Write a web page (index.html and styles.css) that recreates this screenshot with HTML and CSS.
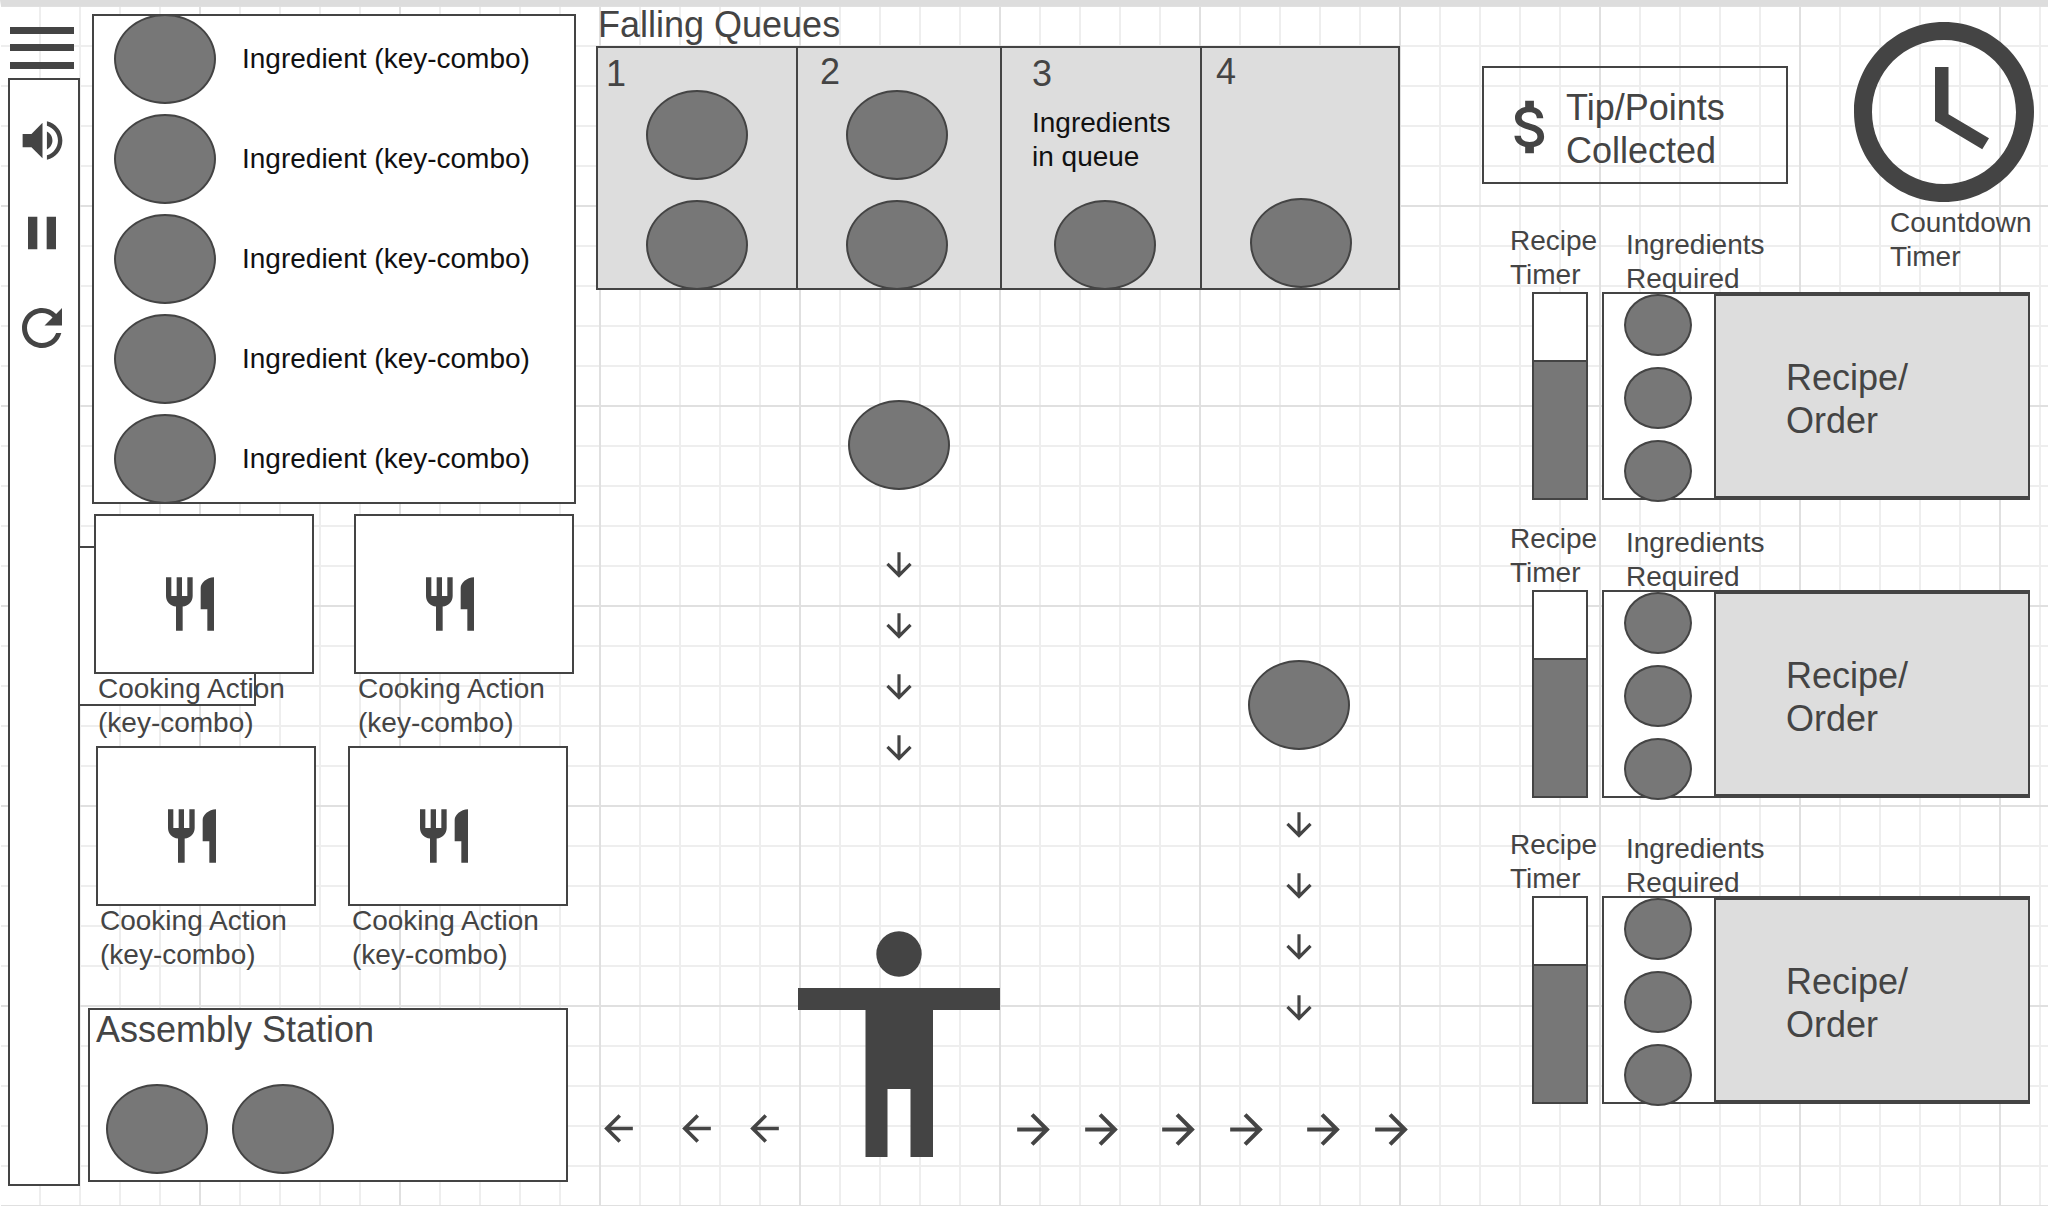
FILE: index.html
```html
<!DOCTYPE html>
<html lang="en">
<head>
<meta charset="utf-8">
<title>Falling Queues</title>
<meta name="viewport" content="width=device-width, initial-scale=1">
<link rel="stylesheet" href="styles.css">
</head>
<body>
<svg class="defs" aria-hidden="true">
  <symbol id="utensils" viewBox="0 0 24 24"><path d="M11 9H9V2H7v7H5V2H3v7c0 2.12 1.66 3.84 3.75 3.97V22h2.5v-9.03C11.34 12.84 13 11.12 13 9V2h-2v7zm5-3v8h2.5v8H21V2c-2.76 0-5 2.24-5 4z"/></symbol>
  <symbol id="right" viewBox="0 0 24 24"><path d="M12 4l-1.41 1.41L16.17 11H4v2h12.17l-5.58 5.59L12 20l8-8z"/></symbol>
  <symbol id="left" viewBox="0 0 24 24"><path d="M20 11H7.83l5.59-5.59L12 4l-8 8 8 8 1.41-1.41L7.83 13H20v-2z"/></symbol>
  <symbol id="down" viewBox="0 0 24 24"><path d="M20 12l-1.41-1.41L13 16.17V4h-2v12.17l-5.58-5.59L4 12l8 8 8-8z"/></symbol>
</svg>
<main class="board">
  <nav class="side">
    <button class="menu" type="button" aria-label="Menu"><svg viewBox="0 0 64 42"><path d="M0 0h64v7H0zM0 17h64v7H0zM0 35h64v7H0z"/></svg></button>
    <div class="toolbar">
      <button class="tool" type="button" aria-label="Sound"><svg width="53" height="53" viewBox="0 0 24 24"><path d="M3 9v6h4l5 5V4L7 9H3zm13.5 3c0-1.77-1.02-3.29-2.5-4.03v8.05c1.48-.73 2.5-2.25 2.5-4.02zM14 3.23v2.06c2.89.86 5 3.54 5 6.71s-2.11 5.85-5 6.71v2.06c4.01-.91 7-4.49 7-8.77s-2.99-7.86-7-8.77z"/></svg></button>
      <button class="tool" type="button" aria-label="Pause"><svg width="56" height="56" viewBox="0 0 24 24"><path d="M6 19h4V5H6v14zm8-14v14h4V5h-4z"/></svg></button>
      <button class="tool" type="button" aria-label="Restart"><svg width="60" height="60" viewBox="0 0 24 24"><path d="M17.65 6.35C16.2 4.9 14.21 4 12 4c-4.42 0-7.99 3.58-7.99 8s3.57 8 7.99 8c3.73 0 6.84-2.55 7.73-6h-2.08c-.82 2.33-3.04 4-5.65 4-3.31 0-6-2.69-6-6s2.69-6 6-6c1.66 0 3.14.69 4.22 1.78L13 11h7V4l-2.35 2.35z"/></svg></button>
    </div>
  </nav>

  <section class="kitchen">
    <ul class="ingredients">
      <li><span class="dot"></span>Ingredient (key-combo)</li>
      <li><span class="dot"></span>Ingredient (key-combo)</li>
      <li><span class="dot"></span>Ingredient (key-combo)</li>
      <li><span class="dot"></span>Ingredient (key-combo)</li>
      <li><span class="dot"></span>Ingredient (key-combo)</li>
    </ul>
    <div class="actions actions-top">
      <div class="underlay"></div>
      <div class="action">
        <button class="card" type="button" aria-labelledby="a1"><svg><use href="#utensils"/></svg></button>
        <p class="label" id="a1">Cooking Action<br>(key-combo)</p>
      </div>
      <div class="action">
        <button class="card" type="button" aria-labelledby="a2"><svg><use href="#utensils"/></svg></button>
        <p class="label" id="a2">Cooking Action<br>(key-combo)</p>
      </div>
    </div>
    <div class="actions actions-bottom">
      <div class="action">
        <button class="card" type="button" aria-labelledby="a3"><svg><use href="#utensils"/></svg></button>
        <p class="label" id="a3">Cooking Action<br>(key-combo)</p>
      </div>
      <div class="action">
        <button class="card" type="button" aria-labelledby="a4"><svg><use href="#utensils"/></svg></button>
        <p class="label" id="a4">Cooking Action<br>(key-combo)</p>
      </div>
    </div>
    <section class="assembly">
      <h2>Assembly Station</h2>
      <div class="plates"><span class="dot"></span><span class="dot"></span></div>
    </section>
  </section>

  <section class="play">
    <h1>Falling Queues</h1>
    <div class="queues lanes">
      <div class="queue q1"><b>1</b><div class="stack"><span class="dot"></span><span class="dot"></span></div></div>
      <div class="queue q2"><b>2</b><div class="stack"><span class="dot"></span><span class="dot"></span></div></div>
      <div class="queue q3"><b>3</b><p>Ingredients<br>in queue</p><div class="stack"><span class="dot"></span></div></div>
      <div class="queue q4"><b>4</b><div class="stack"><span class="dot"></span></div></div>
    </div>
    <div class="field">
      <div class="drops lanes">
        <div class="drop drop-low">
          <span class="dot"></span>
          <div class="trail"><svg><use href="#down"/></svg><svg><use href="#down"/></svg><svg><use href="#down"/></svg><svg><use href="#down"/></svg></div>
        </div>
        <div class="drop drop-high">
          <span class="dot"></span>
          <div class="trail"><svg><use href="#down"/></svg><svg><use href="#down"/></svg><svg><use href="#down"/></svg><svg><use href="#down"/></svg></div>
        </div>
      </div>
      <div class="floor">
        <div class="walk walk-left">
          <svg><use href="#left"/></svg>
          <div class="pair"><svg><use href="#left"/></svg><svg><use href="#left"/></svg></div>
        </div>
        <svg class="player" viewBox="0 0 202 226" role="img" aria-label="Player"><circle cx="101" cy="23" r="22.7"/><path d="M0 57h202v22h-67v147h-22.500v-68h-23v68H67.500V79H0z"/></svg>
        <div class="walk walk-right">
          <div class="pair"><svg><use href="#right"/></svg><svg><use href="#right"/></svg></div>
          <div class="pair"><svg><use href="#right"/></svg><svg><use href="#right"/></svg></div>
          <div class="pair"><svg><use href="#right"/></svg><svg><use href="#right"/></svg></div>
        </div>
      </div>
    </div>
  </section>

  <aside class="status">
    <div class="summary">
      <div class="tips">
        <svg width="70" height="70" viewBox="0 0 24 24"><path d="M11.800 10.900c-2.270-.59-3-1.200-3-2.150 0-1.090 1.010-1.850 2.700-1.850 1.780 0 2.440.85 2.500 2.100h2.210c-.07-1.720-1.120-3.300-3.210-3.810V3h-3v2.160c-1.940.42-3.500 1.680-3.500 3.610 0 2.310 1.910 3.460 4.700 4.130 2.500.6 3 1.480 3 2.410 0 .69-.49 1.790-2.700 1.790-2.060 0-2.870-.92-2.980-2.100h-2.200c.12 2.190 1.760 3.420 3.680 3.830V21h3v-2.150c1.950-.37 3.500-1.500 3.500-3.550 0-2.840-2.430-3.810-4.700-4.400z"/></svg>
        <p>Tip/Points<br>Collected</p>
      </div>
      <div class="countdown">
        <svg viewBox="2 2 20 20"><path d="M11.990 2C6.470 2 2 6.480 2 12s4.470 10 9.990 10C17.520 22 22 17.520 22 12S17.520 2 11.990 2zM12 20c-4.420 0-8-3.580-8-8s3.580-8 8-8 8 3.580 8 8-3.580 8-8 8zm.5-13H11v6l5.250 3.150.75-1.230-4.500-2.670z"/></svg>
        <p>Countdown<br>Timer</p>
      </div>
    </div>
    <div class="orders">
      <section class="order">
        <p class="timer-label">Recipe<br>Timer</p>
        <p class="needs-label">Ingredients<br>Required</p>
        <div class="timer"><div class="timer-fill"></div></div>
        <div class="ticket">
          <div class="needs"><span class="dot"></span><span class="dot"></span><span class="dot"></span></div>
          <h3>Recipe/<br>Order</h3>
        </div>
      </section>
      <section class="order">
        <p class="timer-label">Recipe<br>Timer</p>
        <p class="needs-label">Ingredients<br>Required</p>
        <div class="timer"><div class="timer-fill"></div></div>
        <div class="ticket">
          <div class="needs"><span class="dot"></span><span class="dot"></span><span class="dot"></span></div>
          <h3>Recipe/<br>Order</h3>
        </div>
      </section>
      <section class="order">
        <p class="timer-label">Recipe<br>Timer</p>
        <p class="needs-label">Ingredients<br>Required</p>
        <div class="timer"><div class="timer-fill"></div></div>
        <div class="ticket">
          <div class="needs"><span class="dot"></span><span class="dot"></span><span class="dot"></span></div>
          <h3>Recipe/<br>Order</h3>
        </div>
      </section>
    </div>
  </aside>
</main>
</body>
</html>
```
FILE: styles.css
```css
:root {
  --ink: #444;
  --fill: #777;
  --pale: #ddd;
  --minor: #eee;
  --major: #e0e0e0;
}

* { box-sizing: border-box; }

body {
  margin: 0;
  background: #fff;
  color: var(--ink);
  font: 28px/34px "Liberation Sans", Arial, sans-serif;
}

h1, h2, h3, p, ul { margin: 0; padding: 0; }
h1, h2, h3, .queue b, .tips { font-size: 36px; line-height: 43px; font-weight: 400; }
ul { list-style: none; }
svg { display: block; flex: none; fill: currentColor; }
button { padding: 0; border: 0; background: none; color: inherit; font: inherit; cursor: pointer; }

.defs { display: none; }

/* page frame with graph-paper grid */
.board {
  min-height: 100vh;
  display: grid;
  grid-template-columns: 79px 516px minmax(0, 1fr) 566px;
  border-top: 6px solid var(--pale);
  border-left: 1px solid #fff;
  background-image:
    linear-gradient(var(--major) 2px, transparent 2px),
    linear-gradient(90deg, var(--major) 2px, transparent 2px),
    linear-gradient(var(--minor) 2px, transparent 2px),
    linear-gradient(90deg, var(--minor) 2px, transparent 2px);
  background-size: 200px 200px, 200px 200px, 40px 40px, 40px 40px;
  background-position: 0 -1px, -2px 0, 0 -1px, -2px 0;
}

.dot {
  display: block;
  flex: none;
  width: 102px;
  height: 90px;
  border: 2px solid var(--ink);
  border-radius: 50%;
  background: var(--fill);
}

/* left toolbar */
.side {
  display: flex;
  flex-direction: column;
  gap: 9px;
  padding: 21px 0 20px 7px;
  position: relative;
  z-index: 1;
}
.menu { width: 64px; height: 42px; margin-left: 2px; }
.toolbar {
  flex: 1;
  display: flex;
  flex-direction: column;
  align-items: center;
  gap: 35px;
  padding: 32px 4px 0 0;
  border: 2px solid var(--ink);
  background: #fff;
}
.tool { display: grid; place-items: center; width: 60px; height: 60px; }
.tool:first-child { height: 56px; }

/* ingredients, cooking actions, assembly */
.kitchen { padding: 8px 20px 24px 8px; }
.ingredients {
  display: flex;
  flex-direction: column;
  gap: 10px;
  margin-left: 4px;
  background: #fff;
  color: #111;
  outline: 2px solid var(--ink);
  outline-offset: -2px;
}
.ingredients li { display: flex; align-items: center; gap: 26px; padding-left: 22px; }
.actions { position: relative; display: flex; }
.actions-top { gap: 40px; margin: 10px 0 0 6px; }
.actions-bottom { gap: 32px; margin: 6px 0 0 8px; }
.action { position: relative; width: 220px; }
.card {
  display: block;
  width: 100%;
  height: 160px;
  padding: 56px 62px;
  border: 2px solid var(--ink);
  background: #fff;
}
.card svg { width: 64px; height: 64px; }
.label { margin-top: -2px; padding-left: 4px; }
.underlay {
  position: absolute;
  left: -16px;
  top: 32px;
  width: 178px;
  height: 160px;
  border: 2px solid var(--ink);
  background: #fff;
}
.assembly {
  width: 480px;
  margin-top: 36px;
  padding: 0 6px 6px;
  border: 2px solid var(--ink);
  background: #fff;
}
.assembly h2 { margin-top: -2px; }
.plates { display: flex; gap: 24px; padding: 33px 0 0 10px; }

/* queues and playfield */
.play { display: flex; flex-direction: column; }
.play h1 { margin: -3px 0 0 2px; }
.lanes {
  display: grid;
  grid-template-columns: 200fr 204fr 200fr 200fr;
  margin-right: 82px;
}
.queues {
  height: 244px;
  background: var(--pale);
  outline: 2px solid var(--ink);
  outline-offset: -2px;
}
.queue { display: flex; flex-direction: column; border-left: 2px solid var(--ink); }
.queue b { padding: 6px 0 0 8px; height: 44px; }
.q2 b { padding: 4px 0 0 22px; }
.q3 b, .q3 p { padding-left: 30px; }
.q3 p { color: #111; margin-top: 16px; }
.q4 b { padding: 4px 0 0 14px; }
.stack { display: flex; flex-direction: column; gap: 20px; margin-top: auto; padding-left: 48px; }
.q3 .stack { padding-left: 52px; }
.q4 .stack { padding-bottom: 2px; }
.field { flex: 1; display: grid; }
.drops, .floor { grid-area: 1 / 1; }
.drop { display: flex; flex-direction: column; align-items: center; gap: 56px; }
.drop-low { grid-column: 2; padding: 110px 0 0 2px; }
.drop-high { grid-column: 4; padding: 370px 2px 0 0; }
.trail { display: flex; flex-direction: column; gap: 23px; }
.trail svg { width: 38px; height: 38px; }
.floor { align-self: end; display: flex; align-items: flex-end; padding-bottom: 49px; }
.player { width: 202px; height: 226px; }
.walk, .pair { display: flex; }
.walk-left { width: 202px; gap: 35px; padding: 0 0 7px 1px; }
.walk-left .pair { gap: 25px; }
.walk-left svg { width: 43px; height: 43px; }
.walk-right { gap: 28px; padding: 0 0 3px 9px; }
.walk-right .pair { gap: 19px; }
.walk-right svg { width: 49px; height: 49px; }

/* tips, countdown and orders */
.summary { display: flex; justify-content: space-between; align-items: flex-start; padding: 16px 14px 0 0; height: 218px; }
.tips {
  display: flex;
  align-items: center;
  gap: 0;
  width: 306px;
  height: 118px;
  margin-top: 44px;
  padding: 4px 0 0 12px;
  border: 2px solid var(--ink);
}
.tips p { padding-top: 4px; }
.countdown { width: 180px; }
.countdown svg { width: 180px; height: 180px; }
.countdown p { padding: 4px 0 0 36px; }
.orders { display: flex; flex-direction: column; gap: 21px; padding: 0 18px 20px 28px; }
.order { display: grid; grid-template-columns: 92px 1fr; grid-template-rows: 68px 208px; row-gap: 0; }
.order + .order { padding-top: 1px; }
.order:last-child { padding-top: 9px; }
.timer-label { white-space: nowrap; }
.needs-label { padding: 4px 0 0 24px; }
.timer { width: 56px; height: 208px; margin-left: 22px; padding-top: 66px; border: 2px solid var(--ink); background: #fff; }
.timer-fill { height: 100%; border-top: 2px solid var(--ink); background: var(--fill); }
.ticket { position: relative; display: flex; border: 2px solid var(--ink); background: #fff; }
.needs { display: flex; flex-direction: column; gap: 11px; width: 110px; height: 204px; padding-left: 20px; }
.needs .dot { width: 68px; height: 62px; }
.ticket h3 {
  flex: 1;
  padding: 60px 0 0 70px;
  border: solid var(--ink);
  border-width: 2px 0 2px 2px;
  background: var(--pale);
}
```
